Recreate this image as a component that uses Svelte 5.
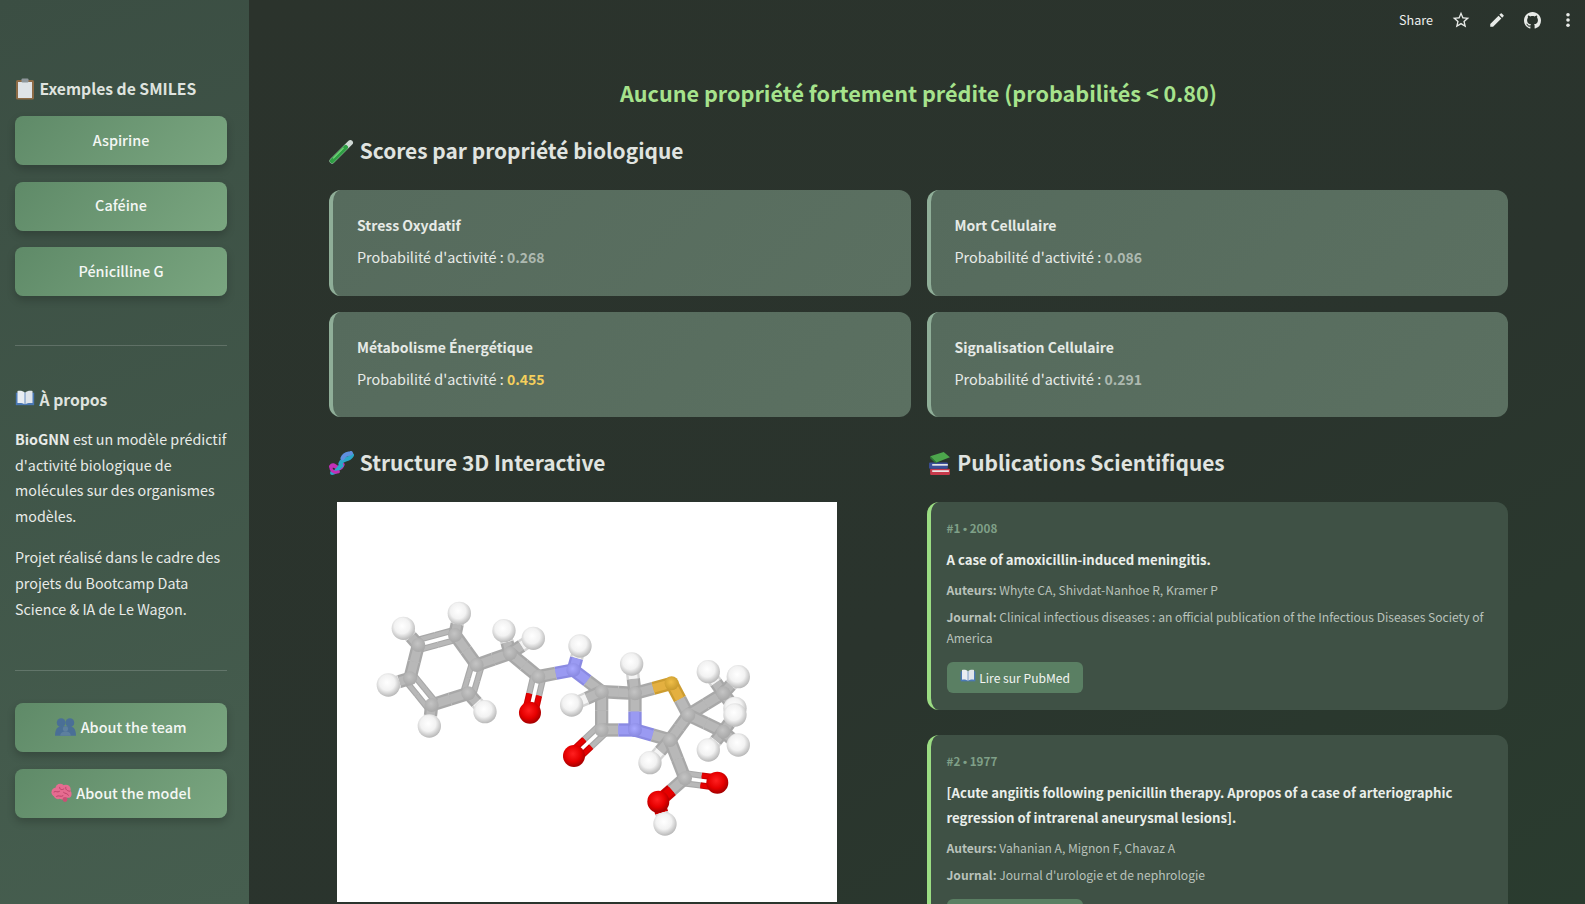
<script>
  const scores = [
    { name: 'Stress Oxydatif', value: '0.268' },
    { name: 'Mort Cellulaire', value: '0.086' },
    { name: 'Métabolisme Énergétique', value: '0.455', mid: true },
    { name: 'Signalisation Cellulaire', value: '0.291' }
  ];

  const examples = ['Aspirine', 'Caféine', 'Pénicilline G'];

  // molecule: coordinates in a 3x space, scaled down in the svg
  const C = '#b8b8b8', H = '#f4f4f4', N = '#9a9af2', O = '#e60000', S = '#e4b040';
  const atoms = [
    [175, 165, C], [285, 135, C], [350, 225, C], [325, 310, C], [215, 345, C], [150, 265, C],
    [130, 115, H], [298, 70, H], [375, 365, H], [208, 408, H], [85, 285, H],
    [450, 190, C], [432, 122, H], [520, 145, H],
    [535, 260, C], [510, 368, O],
    [640, 240, N], [660, 168, H],
    [725, 305, C], [825, 310, C], [725, 420, C], [825, 420, N],
    [635, 345, H], [815, 222, H], [642, 498, O],
    [935, 280, S], [985, 375, C], [930, 450, C], [870, 518, H],
    [975, 565, C], [1072, 578, O], [895, 635, O], [915, 702, H],
    [1090, 310, C], [1045, 245, H], [1135, 260, H], [1125, 355, H],
    [1090, 425, C], [1045, 480, H], [1135, 465, H], [1125, 375, H]
  ];
  const bonds = [
    [0, 1, 2], [1, 2], [2, 3, 2], [3, 4], [4, 5, 2], [5, 0],
    [0, 6], [1, 7], [3, 8], [4, 9], [5, 10],
    [2, 11], [11, 12], [11, 13], [11, 14], [14, 15, 2], [14, 16], [16, 17], [16, 18],
    [18, 19], [18, 20], [20, 21], [19, 21], [18, 22], [19, 23], [20, 24, 2],
    [19, 25], [25, 26], [26, 27], [27, 21], [27, 28], [27, 29], [29, 30, 2], [29, 31], [31, 32],
    [26, 33], [33, 34], [33, 35], [33, 36], [26, 37], [37, 38], [37, 39], [37, 40]
  ];

  function halves(b) {
    const [a1, a2] = [atoms[b[0]], atoms[b[1]]];
    const dx = a2[0] - a1[0], dy = a2[1] - a1[1];
    const len = Math.hypot(dx, dy);
    const mx = (a1[0] + a2[0]) / 2, my = (a1[1] + a2[1]) / 2;
    const offs = b[2] === 2 ? [-15, 15] : [0];
    const nx = -dy / len, ny = dx / len;
    const out = [];
    for (const o of offs) {
      const w = b[2] === 2 ? 19 : 40;
      out.push({ x1: a1[0] + nx * o, y1: a1[1] + ny * o, x2: mx + nx * o, y2: my + ny * o, c: a1[2], w });
      out.push({ x1: mx + nx * o, y1: my + ny * o, x2: a2[0] + nx * o, y2: a2[1] + ny * o, c: a2[2], w });
    }
    return out;
  }
  const sticks = bonds.flatMap(halves);

  function gradId(c) {
    return c === H ? 'gh' : c === O ? 'go' : c === N ? 'gn' : c === S ? 'gs' : 'gc';
  }
  function radius(c) {
    return c === H ? 35 : c === O ? 33 : 21;
  }
  function darker(c) {
    return c === H ? '#d4d4d4' : c === C ? '#a8a8a8' : c === N ? '#8a8ae2' : c === O ? '#c80000' : '#cc9c30';
  }
</script>

{#snippet clipboard()}
  <svg class="emoji clip" viewBox="0 0 20 22"><rect x="1" y="2" width="18" height="19.5" rx="1.5" fill="#8d6b45"/><rect x="3" y="4" width="14" height="16" fill="#dfe3e6"/><rect x="6.5" y="0.5" width="7" height="4" rx="1" fill="#8f979c"/></svg>
{/snippet}
{#snippet tube()}
  <svg class="emoji" viewBox="0 0 24 24"><path d="M3 21 L20.5 3.5" stroke="#cfd8d4" stroke-width="5" stroke-linecap="round"/><path d="M3 21 L16 8" stroke="#2f9e44" stroke-width="4.6" stroke-linecap="round"/><path d="M4 18.500 L14 8.500" stroke="#7ddc7f" stroke-width="1"/></svg>
{/snippet}
{#snippet dna()}
  <svg class="emoji" viewBox="0 0 24 24" fill="none" stroke-width="4" stroke-linecap="round"><path d="M2 15 C5 10 9 22 13 13" stroke="#c22fb6"/><path d="M3 21 C8 21 9 15 12 14" stroke="#2ba7c9"/><path d="M2 17 C3 20 6 21 9 20" stroke="#c22fb6" stroke-width="3"/><path d="M11 12 C14 5 18 11 22 4" stroke="#2ba7c9"/><path d="M13 7 C15 2 19 3 21 2" stroke="#5f8fe0"/></svg>
{/snippet}
{#snippet books()}
  <svg class="emoji" viewBox="0 0 24 24"><rect x="3" y="17" width="19" height="6" rx="1" fill="#c73a4b"/><rect x="5" y="18.500" width="16" height="1.6" fill="#eee"/><rect x="2" y="11" width="18" height="6" rx="1" fill="#3b4f9a"/><rect x="5" y="12.500" width="15" height="1.6" fill="#e8e8e8"/><path d="M3 5 L16 1 L22 6 L9 11 Z" fill="#4ca64c"/><path d="M3 5 L9 11 L9 12.500 L3 7 Z" fill="#2d7a35"/></svg>
{/snippet}
{#snippet book()}
  <svg class="emoji small" viewBox="0 0 24 20"><path d="M1 3 H23 V18 H1 Z" fill="#4a78b5"/><path d="M3 1 C6 0 10 1 11.500 2.500 V17 C10 15.500 6 15 3 15.500 Z" fill="#e9edf2"/><path d="M21 1 C18 0 14 1 12.500 2.500 V17 C14 15.500 18 15 21 15.500 Z" fill="#dfe4ea"/></svg>
{/snippet}
{#snippet team()}
  <svg class="emoji btn-ico" viewBox="0 0 24 22" fill="#4a6f96"><circle cx="7" cy="6" r="5"/><circle cx="17" cy="6" r="5"/><path d="M0 21 C0 12 4 10 8 10 H16 C20 10 24 12 24 21 Z"/><circle cx="12" cy="13" r="3" fill="#5d7f9e"/><path d="M6 21 C6 17 9 16 12 16 C15 16 18 17 18 21 Z" fill="#5d7f9e"/></svg>
{/snippet}
{#snippet brain()}
  <svg class="emoji btn-ico" viewBox="0 0 24 22">
    <g fill="#e56c90"><circle cx="5.500" cy="10" r="5"/><circle cx="10.500" cy="6" r="5.500"/><circle cx="17" cy="7" r="5.500"/><circle cx="19" cy="12" r="4.500"/><circle cx="13.500" cy="13" r="5.500"/><circle cx="8" cy="13" r="5"/></g>
    <circle cx="16" cy="18.500" r="2.800" fill="#c94f75"/>
    <path d="M3 10 C6 8 7 11 10 9 M10 4 C9 7 13 8 15 6 M17 4 C16 7 19 9 22 9 M6 15 C9 13 11 16 14 14 M14 10 C16 12 19 11 20 14" stroke="#b53e65" stroke-width="1" fill="none"/>
  </svg>
{/snippet}

<div class="app">
  <aside class="sidebar">
    <h3 class="side-title first">{@render clipboard()} Exemples de SMILES</h3>
    {#each examples as ex}
      <button class="side-btn">{ex}</button>
    {/each}
    <hr class="first-rule" />
    <h3 class="side-title">{@render book()} À propos</h3>
    <p class="intro"><strong>BioGNN</strong> est un modèle prédictif d'activité biologique de molécules sur des organismes modèles.</p>
    <p class="credit">Projet réalisé dans le cadre des projets du Bootcamp Data Science &amp; IA de Le Wagon.</p>
    <hr class="second-rule" />
    <button class="side-btn low">{@render team()} About the team</button>
    <button class="side-btn low">{@render brain()} About the model</button>
  </aside>

  <main class="main">
    <header class="toolbar">
      <span>Share</span>
      <svg class="tool star" viewBox="0 0 24 24"><path d="M22 9.24l-7.19-.62L12 2 9.19 8.63 2 9.24l5.46 4.73L5.82 21 12 17.27 18.18 21l-1.63-7.03L22 9.24zM12 15.4l-3.76 2.27 1-4.28-3.32-2.88 4.38-.38L12 6.1l1.71 4.04 4.38.38-3.32 2.88 1 4.28L12 15.4z"/></svg>
      <svg class="tool" viewBox="0 0 24 24"><path d="M3 17.25V21h3.75L17.81 9.94l-3.75-3.75L3 17.25zM20.71 7.04a1 1 0 000-1.41l-2.34-2.34a1 1 0 00-1.41 0l-1.83 1.83 3.75 3.75 1.83-1.83z"/></svg>
      <svg class="tool gh" viewBox="0 0 16 16"><path d="M8 0C3.58 0 0 3.58 0 8c0 3.54 2.29 6.53 5.47 7.59.4.07.55-.17.55-.38 0-.19-.01-.82-.01-1.49-2.01.37-2.53-.49-2.69-.94-.09-.23-.48-.94-.82-1.13-.28-.15-.68-.52-.01-.53.63-.01 1.08.58 1.23.82.72 1.21 1.87.87 2.33.66.07-.52.28-.87.51-1.07-1.78-.2-3.64-.89-3.64-3.95 0-.87.31-1.59.82-2.15-.08-.2-.36-1.02.08-2.12 0 0 .67-.21 2.2.82.64-.18 1.32-.27 2-.27s1.36.09 2 .27c1.53-1.04 2.2-.82 2.2-.82.44 1.1.16 1.92.08 2.12.51.56.82 1.27.82 2.15 0 3.07-1.87 3.75-3.65 3.95.29.25.54.73.54 1.48 0 1.07-.01 1.93-.01 2.2 0 .21.15.46.55.38A8.013 8.013 0 0016 8c0-4.42-3.58-8-8-8z"/></svg>
      <svg class="tool" viewBox="0 0 24 24"><circle cx="12" cy="5" r="2.400"/><circle cx="12" cy="12" r="2.400"/><circle cx="12" cy="19" r="2.400"/></svg>
    </header>

    <div class="content">
      <h2 class="verdict">Aucune propriété fortement prédite (probabilités &lt; 0.80)</h2>
      <h2 class="section scores-title">{@render tube()} Scores par propriété biologique</h2>

      <div class="score-grid">
        {#each scores as s}
          <div class="score-card">
            <div class="score-name">{s.name}</div>
            <div class="score-line">Probabilité d'activité : <b class:mid={s.mid}>{s.value}</b></div>
          </div>
        {/each}
      </div>

      <div class="columns">
        <section>
          <h2 class="section">{@render dna()} Structure 3D Interactive</h2>
          <div class="viewer">
            <svg width="500" height="400" viewBox="0 0 500 400">
              <defs>
                <radialGradient id="gh" cx="45%" cy="40%" r="60%"><stop offset="0%" stop-color="#fff"/><stop offset="55%" stop-color="#f2f2f2"/><stop offset="100%" stop-color="#b8b8b8"/></radialGradient>
                <radialGradient id="go" cx="45%" cy="40%" r="60%"><stop offset="0%" stop-color="#ff2020"/><stop offset="60%" stop-color="#e60000"/><stop offset="100%" stop-color="#a40000"/></radialGradient>
                <radialGradient id="gc" cx="45%" cy="40%" r="60%"><stop offset="0%" stop-color="#c4c4c4"/><stop offset="100%" stop-color="#a8a8a8"/></radialGradient>
                <radialGradient id="gn" cx="45%" cy="40%" r="60%"><stop offset="0%" stop-color="#a8a8ff"/><stop offset="100%" stop-color="#8888e0"/></radialGradient>
                <radialGradient id="gs" cx="45%" cy="40%" r="60%"><stop offset="0%" stop-color="#f0be48"/><stop offset="100%" stop-color="#c89a2c"/></radialGradient>
              </defs>
              <g transform="translate(23 88) scale(0.3333)">
                {#each sticks as s}
                  <line x1={s.x1} y1={s.y1} x2={s.x2} y2={s.y2} stroke={darker(s.c)} stroke-width={s.w} />
                  <line x1={s.x1} y1={s.y1} x2={s.x2} y2={s.y2} stroke={s.c} stroke-width={s.w * 0.65} />
                {/each}
                {#each atoms as a}
                  <circle cx={a[0]} cy={a[1]} r={radius(a[2])} fill="url(#{gradId(a[2])})" />
                {/each}
              </g>
            </svg>
          </div>
        </section>

        <section>
          <h2 class="section">{@render books()} Publications Scientifiques</h2>
          <article class="pub">
            <div class="pub-meta">#1 <span class="dot">•</span> 2008</div>
            <div class="pub-title">A case of amoxicillin-induced meningitis.</div>
            <div class="pub-row"><b>Auteurs:</b> Whyte CA, Shivdat-Nanhoe R, Kramer P</div>
            <div class="pub-row"><b>Journal:</b> Clinical infectious diseases : an official publication of the Infectious Diseases Society of America</div>
            <span class="pub-link">{@render book()} Lire sur PubMed</span>
          </article>
          <article class="pub">
            <div class="pub-meta">#2 <span class="dot">•</span> 1977</div>
            <div class="pub-title">[Acute angiitis following penicillin therapy. Apropos of a case of arteriographic regression of intrarenal aneurysmal lesions].</div>
            <div class="pub-row"><b>Auteurs:</b> Vahanian A, Mignon F, Chavaz A</div>
            <div class="pub-row"><b>Journal:</b> Journal d'urologie et de nephrologie</div>
            <span class="pub-link">{@render book()} Lire sur PubMed</span>
          </article>
        </section>
      </div>
    </div>
  </main>
</div>

<style>
  :global(body) {
    margin: 0;
    overflow: hidden;
    background: #2a342c;
  }
  .app {
    display: flex;
    height: 904px;
    overflow: hidden;
    font-family: "Noto Sans CJK SC", "Open Sans", sans-serif;
    font-size: 14.4px;
    color: #e8ebe8;
  }
  .sidebar {
    width: 249px;
    flex: none;
    box-sizing: border-box;
    padding: 76px 22px 0 15px;
    background: linear-gradient(160deg, #3b4e43 0%, #465e4f 100%);
  }
  .side-title {
    margin: 0;
    font-size: 15.7px;
    line-height: 26px;
    font-weight: 700;
    color: #dfe3df;
  }
  .first { margin-bottom: 14px; }
  .side-btn {
    display: block;
    width: 100%;
    height: 49px;
    margin: 0 0 16.5px;
    padding-bottom: 4px;
    border: none;
    border-radius: 8px;
    background: linear-gradient(135deg, #5f8a68 0%, #7aa680 100%);
    box-shadow: 0 4px 8px rgba(0, 0, 0, 0.2);
    color: #f4f7f4;
    font: inherit;
    font-weight: 500;
  }
  .side-btn.low { padding-bottom: 3px; }
  hr {
    border: none;
    border-top: 1px solid rgba(255, 255, 255, 0.17);
    margin: 0;
  }
  .first-rule { margin: 49px 0 41px; }
  .second-rule { margin: 49px 0 32px; }
  .sidebar p {
    margin: 0 -4px 0 0;
    font-size: 14.3px;
    line-height: 25.6px;
    color: #e8ebe8;
  }
  .sidebar .intro { margin-top: 13px; }
  .sidebar .credit { margin-top: 16px; }
  .sidebar strong { font-weight: 700; }
  .main {
    flex: 1;
    min-width: 0;
    background: linear-gradient(150deg, #2b332c 0%, #2a342d 60%, #2a3c2f 100%);
  }
  .toolbar {
    height: 40px;
    display: flex;
    align-items: center;
    justify-content: flex-end;
    gap: 18px;
    padding-right: 8px;
    font-size: 12.6px;
    color: #eef0ee;
  }
  .toolbar span { margin-right: 1px; padding-bottom: 1px; }
  .tool {
    width: 18px;
    height: 18px;
    fill: #e8ebe8;
  }
  .tool.gh { width: 17px; height: 17px; }
  .tool.star { width: 20px; height: 20px; margin: 0 -1px; }
  .content {
    padding: 33px 77px 0 80px;
  }
  .verdict {
    margin: 0;
    text-align: center;
    font-size: 21.6px;
    line-height: 40px;
    font-weight: 700;
    color: #a6e38c;
  }
  .section {
    margin: 0;
    font-size: 20.9px;
    line-height: 36px;
    font-weight: 700;
    color: #e0e4e0;
  }
  .scores-title { margin: 19px 0 22px; }
  .score-grid {
    display: grid;
    grid-template-columns: 1fr 1fr;
    column-gap: 16px;
    row-gap: 16px;
  }
  .score-card {
    height: 105.5px;
    box-sizing: border-box;
    padding: 21px 24px;
    border-left: 4px solid #8fae98;
    border-radius: 12px;
    background: linear-gradient(135deg, #566b5d 0%, #5b7061 100%);
  }
  .score-name {
    font-size: 14px;
    font-weight: 700;
    line-height: 28px;
    color: #e6eae6;
  }
  .score-line {
    margin-top: 4px;
    line-height: 28px;
    color: #e8ebe8;
  }
  .score-line b {
    font-size: 14px;
    font-weight: 700;
    color: #adb9b0;
  }
  .score-line b.mid { color: #f4cf5c; }
  .columns {
    display: grid;
    grid-template-columns: 1fr 1fr;
    gap: 16px;
    margin-top: 26.5px;
  }
  .columns .section { margin-bottom: 22px; }
  .viewer {
    margin-left: 8px;
    width: 500px;
    height: 400px;
    background: #fff;
  }
  .viewer svg { display: block; }
  .pub {
    box-sizing: border-box;
    margin-bottom: 25px;
    padding: 15px 16px 16.5px 16px;
    border-left: 4px solid #9bdc83;
    border-radius: 12px;
    background: #3f5145;
  }
  .pub-meta {
    font-size: 11.7px;
    line-height: 22px;
    font-weight: 700;
    color: #7fa088;
  }
  .dot { font-family: "Liberation Sans", sans-serif; }
  .pub-title {
    margin-top: 7.5px;
    font-size: 13.2px;
    line-height: 25px;
    font-weight: 700;
    color: #eaeeea;
  }
  .pub-row {
    margin-top: 6px;
    font-size: 12.1px;
    line-height: 21px;
    color: #b9c2bb;
  }
  .pub-title + .pub-row { margin-top: 7px; }
  .pub-row b { font-weight: 700; }
  .pub-link {
    display: inline-block;
    margin-top: 14px;
    padding: 0 13px;
    height: 31px;
    line-height: 31px;
    border-radius: 6px;
    background: #5a7f63;
    color: #f2f5f2;
    font-size: 12.1px;
  }
  .emoji {
    display: inline-block;
    width: 25px;
    height: 25px;
    vertical-align: -5px;
    margin-right: 1px;
  }
  .emoji.clip { width: 20px; height: 22px; }
  .emoji.btn-ico { width: 21px; height: 20px; vertical-align: -4px; }
  .emoji.small {
    width: 20px;
    height: 17px;
    vertical-align: -1px;
  }
  .pub-link .emoji.small {
    width: 16px;
    height: 14px;
    vertical-align: 0;
  }
</style>
